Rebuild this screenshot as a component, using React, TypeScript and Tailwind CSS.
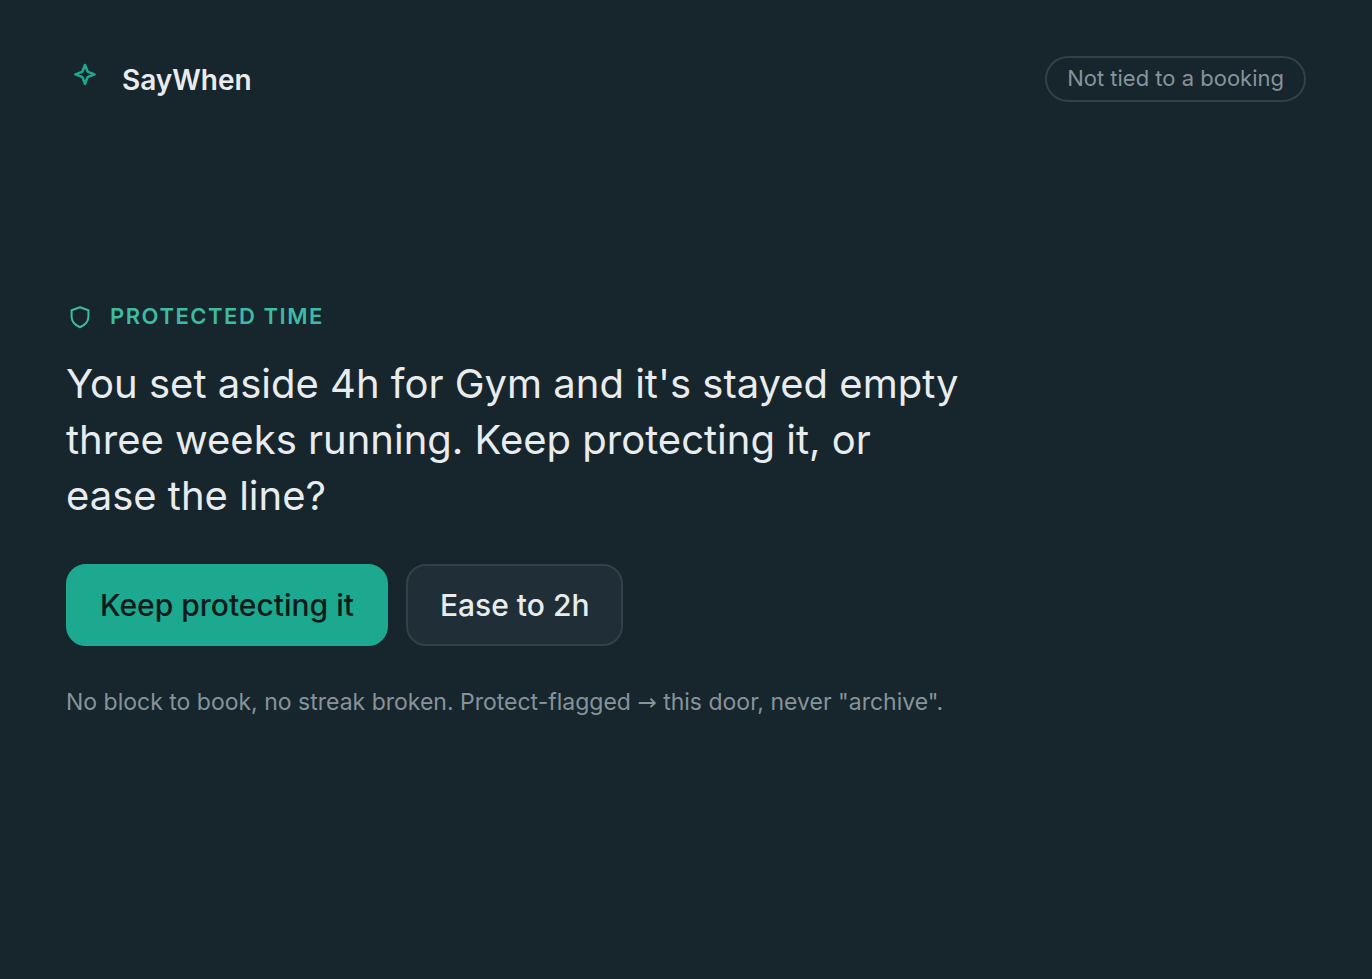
function SparkIcon() {
  return (
    <svg
      className="h-7 w-7"
      viewBox="0 0 28 28"
      fill="none"
      stroke="currentColor"
      strokeWidth={2.6}
      strokeLinejoin="round"
      aria-hidden="true"
    >
      <path d="M15 4L17.2 9.6Q17.6 10.7 18.7 11.1L24.6 13.4L18.7 15.6Q17.6 16 17.2 17.1L15 22.8L12.8 17.1Q12.4 16 11.3 15.6L5.4 13.4L11.3 11.1Q12.4 10.7 12.8 9.6Z" />
    </svg>
  );
}

function ShieldIcon() {
  return (
    <svg
      className="h-7 w-7"
      viewBox="0 0 28 28"
      fill="none"
      stroke="currentColor"
      strokeWidth={2}
      strokeLinejoin="round"
      aria-hidden="true"
    >
      <path d="M14 5.2L22.4 8.2V14.5C22.4 19.5 19.5 23 14 25.2C8.5 23 5.6 19.5 5.6 14.5V8.2Z" />
    </svg>
  );
}

export default function App() {
  return (
    <div className="flex min-h-screen flex-col bg-[#17252c] px-[66px] py-14 font-['Inter',sans-serif] text-[#e8ecef]">
      <header className="flex items-center justify-between">
        <div className="flex items-center gap-6">
          <span className="mb-2 ml-1 text-[#1da890]">
            <SparkIcon />
          </span>
          <span className="pt-0.5 text-[28px] leading-9 font-semibold">
            SayWhen
          </span>
        </div>
        <span className="rounded-full border-2 border-[#324047] px-5 pt-[3px] pb-[5px] text-[22px] leading-[34px] text-[#87939b]">
          Not tied to a booking
        </span>
      </header>

      <main className="flex flex-1 flex-col items-start justify-center pb-2">
        <div className="flex items-center gap-4 text-[#3dbba3]">
          <ShieldIcon />
          <h2 className="text-[22px] leading-8 font-semibold tracking-[0.07em] uppercase">
            Protected time
          </h2>
        </div>
        <h1 className="mt-6 max-w-[900px] text-[40px] leading-14">
          You set aside 4h for Gym and it's stayed empty three weeks running.
          Keep protecting it, or ease the line?
        </h1>
        <div className="mt-10 flex flex-wrap gap-[18px]">
          <button
            type="button"
            className="rounded-[20px] border-2 border-[#1da890] bg-[#1da890] px-8 py-5 text-[30px] leading-[38px] font-medium text-[#0e1b1a]"
          >
            Keep protecting it
          </button>
          <button
            type="button"
            className="rounded-[20px] border-2 border-[#324047] bg-[#202f37] px-8 py-5 text-[30px] leading-[38px] font-medium"
          >
            Ease to 2h
          </button>
        </div>
        <p className="mt-10 text-[23px] leading-8 text-[#87939b]">
          No block to book, no streak broken. Protect-flagged{" "}
          <span className="font-['DejaVu_Sans']">→</span> this door, never
          "archive".
        </p>
      </main>
    </div>
  );
}
